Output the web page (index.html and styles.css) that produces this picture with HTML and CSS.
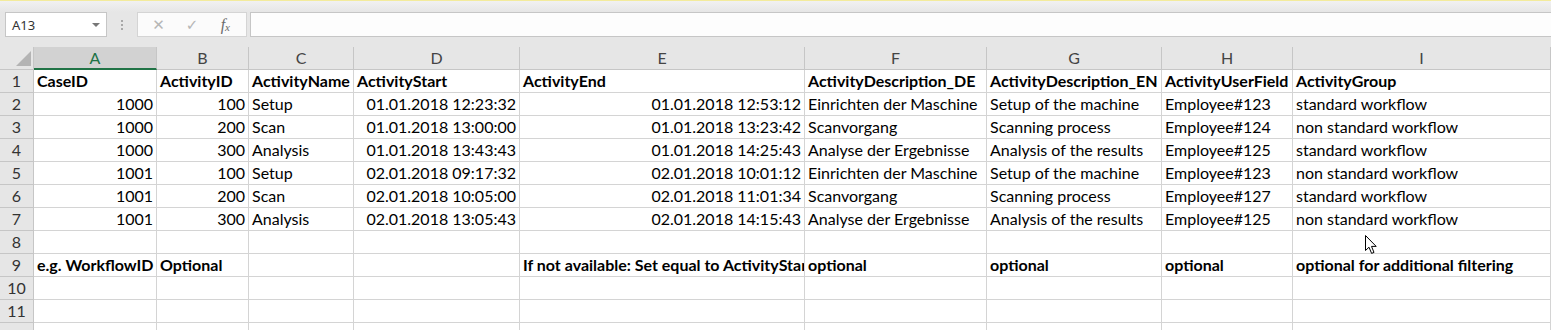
FILE: index.html
```html
<!DOCTYPE html>
<html lang="en">
<head>
    <meta charset="UTF-8">
    <title>Activities</title>
    <link rel="stylesheet" href="styles.css">
</head>
<body>

    <div class="topbar">
        <div class="namebox">
            <span>A13</span>
            <span class="drop"></span>
        </div>
        <div class="grip"><i></i><i></i><i></i></div>
        <div class="tools">
            <span class="tool">&#x2715;</span>
            <span class="tool">&#x2713;</span>
            <span class="tool fx">f<sub>x</sub></span>
        </div>
        <div class="formula"></div>
    </div>

    <div class="sheet">
        <div class="corner"><span class="tri"></span></div>
        <div class="colhead active">A</div>
        <div class="colhead">B</div>
        <div class="colhead">C</div>
        <div class="colhead">D</div>
        <div class="colhead">E</div>
        <div class="colhead">F</div>
        <div class="colhead">G</div>
        <div class="colhead">H</div>
        <div class="colhead">I</div>

        <div class="rowhead">1</div>
        <div class="cell b">CaseID</div>
        <div class="cell b">ActivityID</div>
        <div class="cell b">ActivityName</div>
        <div class="cell b">ActivityStart</div>
        <div class="cell b">ActivityEnd</div>
        <div class="cell b">ActivityDescription_DE</div>
        <div class="cell b">ActivityDescription_EN</div>
        <div class="cell b">ActivityUserField</div>
        <div class="cell b">ActivityGroup</div>

        <div class="rowhead">2</div>
        <div class="cell r">1000</div>
        <div class="cell r">100</div>
        <div class="cell">Setup</div>
        <div class="cell r">01.01.2018 12:23:32</div>
        <div class="cell r">01.01.2018 12:53:12</div>
        <div class="cell">Einrichten der Maschine</div>
        <div class="cell">Setup of the machine</div>
        <div class="cell">Employee#123</div>
        <div class="cell">standard workflow</div>

        <div class="rowhead">3</div>
        <div class="cell r">1000</div>
        <div class="cell r">200</div>
        <div class="cell">Scan</div>
        <div class="cell r">01.01.2018 13:00:00</div>
        <div class="cell r">01.01.2018 13:23:42</div>
        <div class="cell">Scanvorgang</div>
        <div class="cell">Scanning process</div>
        <div class="cell">Employee#124</div>
        <div class="cell">non standard workflow</div>

        <div class="rowhead">4</div>
        <div class="cell r">1000</div>
        <div class="cell r">300</div>
        <div class="cell">Analysis</div>
        <div class="cell r">01.01.2018 13:43:43</div>
        <div class="cell r">01.01.2018 14:25:43</div>
        <div class="cell">Analyse der Ergebnisse</div>
        <div class="cell">Analysis of the results</div>
        <div class="cell">Employee#125</div>
        <div class="cell">standard workflow</div>

        <div class="rowhead">5</div>
        <div class="cell r">1001</div>
        <div class="cell r">100</div>
        <div class="cell">Setup</div>
        <div class="cell r">02.01.2018 09:17:32</div>
        <div class="cell r">02.01.2018 10:01:12</div>
        <div class="cell">Einrichten der Maschine</div>
        <div class="cell">Setup of the machine</div>
        <div class="cell">Employee#123</div>
        <div class="cell">non standard workflow</div>

        <div class="rowhead">6</div>
        <div class="cell r">1001</div>
        <div class="cell r">200</div>
        <div class="cell">Scan</div>
        <div class="cell r">02.01.2018 10:05:00</div>
        <div class="cell r">02.01.2018 11:01:34</div>
        <div class="cell">Scanvorgang</div>
        <div class="cell">Scanning process</div>
        <div class="cell">Employee#127</div>
        <div class="cell">standard workflow</div>

        <div class="rowhead">7</div>
        <div class="cell r">1001</div>
        <div class="cell r">300</div>
        <div class="cell">Analysis</div>
        <div class="cell r">02.01.2018 13:05:43</div>
        <div class="cell r">02.01.2018 14:15:43</div>
        <div class="cell">Analyse der Ergebnisse</div>
        <div class="cell">Analysis of the results</div>
        <div class="cell">Employee#125</div>
        <div class="cell">non standard workflow</div>

        <div class="rowhead">8</div>
        <div class="cell"></div>
        <div class="cell"></div>
        <div class="cell"></div>
        <div class="cell"></div>
        <div class="cell"></div>
        <div class="cell"></div>
        <div class="cell"></div>
        <div class="cell"></div>
        <div class="cell"></div>

        <div class="rowhead">9</div>
        <div class="cell b">e.g. WorkflowID</div>
        <div class="cell b">Optional</div>
        <div class="cell"></div>
        <div class="cell"></div>
        <div class="cell b">If not available: Set equal to ActivityStart</div>
        <div class="cell b">optional</div>
        <div class="cell b">optional</div>
        <div class="cell b">optional</div>
        <div class="cell b">optional for additional filtering</div>

        <div class="rowhead">10</div>
        <div class="cell"></div>
        <div class="cell"></div>
        <div class="cell"></div>
        <div class="cell"></div>
        <div class="cell"></div>
        <div class="cell"></div>
        <div class="cell"></div>
        <div class="cell"></div>
        <div class="cell"></div>

        <div class="rowhead">11</div>
        <div class="cell"></div>
        <div class="cell"></div>
        <div class="cell"></div>
        <div class="cell"></div>
        <div class="cell"></div>
        <div class="cell"></div>
        <div class="cell"></div>
        <div class="cell"></div>
        <div class="cell"></div>

        <div class="rowhead"></div>
        <div class="cell"></div>
        <div class="cell"></div>
        <div class="cell"></div>
        <div class="cell"></div>
        <div class="cell"></div>
        <div class="cell"></div>
        <div class="cell"></div>
        <div class="cell"></div>
        <div class="cell"></div>
    </div>

    <svg class="pointer" width="13" height="20" viewBox="0 0 13 20">
        <path d="M0.5 0.5 L0.5 15.5 L4 12.2 L6.6 18.4 L9 17.4 L6.5 11.4 L11.2 11.4 Z" fill="#fff" stroke="#000" stroke-width="1"/>
    </svg>

</body>
</html>
```

FILE: styles.css
```css
body {
    margin: 0;
    background: #fff;
    font-family: Lato, "Open Sans", sans-serif;
    overflow: hidden;
    position: relative;
}
.topbar {
    height: 47px;
    box-sizing: border-box;
    border-top: 1px solid #f3eb9c;
    background: linear-gradient(#f1f1f1, #e6e6e6 11px);
    display: flex;
    align-items: flex-start;
    padding-top: 11px;
}
.namebox {
    margin-left: 5px;
    width: 102px;
    height: 25px;
    box-sizing: border-box;
    background: #fff;
    border: 1px solid #c6c6c6;
    display: flex;
    align-items: center;
    justify-content: space-between;
    padding: 0 6px 0 6px;
    font-family: "Noto Sans", sans-serif;
    font-size: 13px;
    color: #333;
}
.drop {
    width: 0;
    height: 0;
    border-left: 4px solid transparent;
    border-right: 4px solid transparent;
    border-top: 4px solid #777;
}
.grip {
    width: 30px;
    height: 25px;
    display: flex;
    flex-direction: column;
    align-items: center;
    justify-content: center;
    gap: 2px;
}
.grip i {
    width: 2px;
    height: 2px;
    background: #a8a8a8;
}
.tools {
    width: 110px;
    height: 25px;
    box-sizing: border-box;
    background: #fbfbfb;
    border: 1px solid #d4d4d4;
    display: flex;
    align-items: center;
    justify-content: space-around;
    padding: 0 4px;
}
.tool {
    color: #b6b6b6;
    font-family: "DejaVu Sans", sans-serif;
    font-size: 15px;
    width: 24px;
    text-align: center;
}
.tool.fx {
    color: #6a6a6a;
    font-family: "Liberation Serif", serif;
    font-style: italic;
    font-size: 16px;
}
.tool.fx sub {
    font-size: 11px;
    vertical-align: -1px;
}
.formula {
    flex: 1;
    margin-left: 3px;
    height: 25px;
    box-sizing: border-box;
    background: #fdfdfd;
    border: 1px solid #c6c6c6;
    border-right: none;
}
.sheet {
    display: grid;
    grid-template-columns: 34px 123px 92px 105px 166px 285px 182px 175px 131px 1fr;
    grid-auto-rows: 23px;
}
.sheet > div {
    box-sizing: border-box;
    border-right: 1px solid #d4d4d4;
    border-bottom: 1px solid #d4d4d4;
    white-space: nowrap;
    overflow: hidden;
}
.corner {
    background: #e6e6e6;
    position: relative;
}
.sheet > .corner,
.sheet > .colhead,
.sheet > .rowhead {
    border-color: #c6c6c6;
}
.tri {
    position: absolute;
    right: 2px;
    bottom: 3px;
    width: 0;
    height: 0;
    border-left: 15px solid transparent;
    border-bottom: 15px solid #b4b4b4;
}
.colhead {
    background: #e6e6e6;
    color: #444;
    font-size: 16px;
    text-align: center;
    line-height: 22px;
}
.sheet > .colhead.active {
    background: #d2d2d2;
    color: #217346;
    border-bottom: 2px solid #217346;
}
.rowhead {
    background: #e6e6e6;
    color: #333;
    font-size: 16px;
    text-align: center;
    line-height: 22px;
}
.cell {
    font-size: 16px;
    color: #000;
    line-height: 22px;
    padding: 0 3px;
}
.cell.r {
    text-align: right;
}
.cell.b {
    font-weight: bold;
}
.pointer {
    position: absolute;
    left: 1365px;
    top: 235px;
}
```
